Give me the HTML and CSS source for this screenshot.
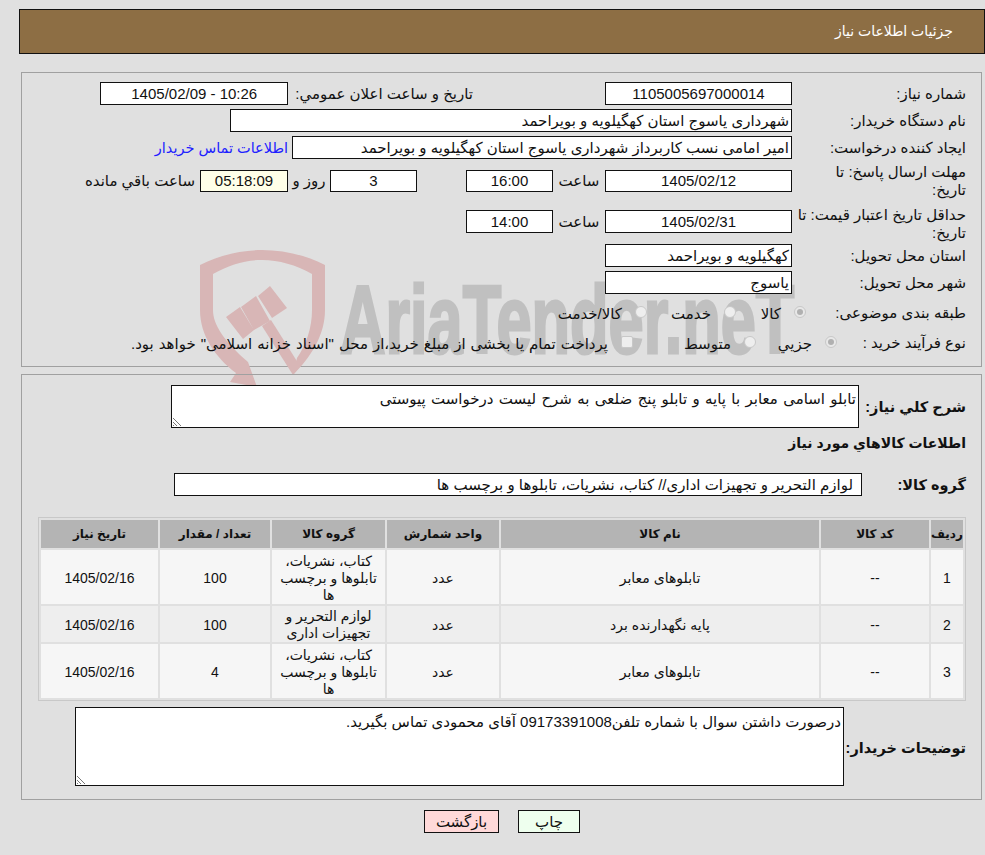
FILE: index.html
```html
<!DOCTYPE html>
<html lang="fa" dir="rtl">
<head>
<meta charset="utf-8">
<title>جزئیات اطلاعات نیاز</title>
<link rel="stylesheet" href="styles.css">
</head>
<body>
<header class="title-bar">جزئیات اطلاعات نیاز</header>

<section class="panel top-panel">
  <svg class="wm-shield" viewBox="195 245 140 145" width="140" height="145" aria-hidden="true">
    <path class="wm-red" d="M200 265 C221 255 241 250 262 250 C284 250 305 255 325 265 L325 310 C325 335 311 357 293 375 L297 358 C306 345 312 328 312 310 L312 274 C296 265 279 260 262 260 C245 260 229 265 213 274 L213 310 C213 325 225 342 248 362 L257 387 L230 382 L236 373 C215 357 200 335 200 310 Z"/>
    <path class="wm-red" d="M270 286 L287 308 L272 318 L258 296 Z M256 296 L270 321 L254 330 L241 307 Z M240 307 L254 330 L243 339 L226 317 Z"/>
    <path class="wm-red" d="M271 320 L262 326 L286 364 L293 375 L300 366 Z"/>
  </svg>
  <span class="wm-text" dir="ltr" aria-hidden="true">AriaTender.neT</span>

  <div class="row r-h">
    <span class="lbl">شماره نیاز:</span>
    <span class="box w-187 center">1105005697000014</span>
    <span class="lbl-pub">تاريخ و ساعت اعلان عمومي:</span>
    <span class="box w-188 center" dir="ltr">1405/02/09 - 10:26</span>
  </div>
  <div class="row r-h">
    <span class="lbl">نام دستگاه خریدار:</span>
    <span class="box w-562">شهرداری یاسوج استان کهگیلویه و بویراحمد</span>
  </div>
  <div class="row r-h r-gap">
    <span class="lbl">ایجاد کننده درخواست:</span>
    <span class="box w-500">امیر امامی نسب کاربرداز شهرداری یاسوج استان کهگیلویه و بویراحمد</span>
    <a class="contact" href="#">اطلاعات تماس خریدار</a>
  </div>
  <div class="row r-deadline">
    <span class="lbl">مهلت ارسال پاسخ: تا<br>تاریخ:</span>
    <span class="box w-187 short center">1405/02/12</span>
    <span class="lbl-time">ساعت</span>
    <span class="box w-87 short center">16:00</span>
    <span class="box w-87 short center days">3</span>
    <span class="lbl-day">روز و</span>
    <span class="box w-88 short center timer">05:18:09</span>
    <span class="lbl-left">ساعت باقي مانده</span>
  </div>
  <div class="row r-h r-gap">
    <span class="lbl lbl-low">حداقل تاریخ اعتبار قیمت: تا<br>تاریخ:</span>
    <span class="box w-187 center">1405/02/31</span>
    <span class="lbl-time">ساعت</span>
    <span class="box w-87 center">14:00</span>
  </div>
  <div class="row r-h">
    <span class="lbl">استان محل تحویل:</span>
    <span class="box w-187">کهگیلویه و بویراحمد</span>
  </div>
  <div class="row r-h">
    <span class="lbl">شهر محل تحویل:</span>
    <span class="box w-187">یاسوج</span>
  </div>
  <div class="row r-opt r-subject">
    <span class="lbl lbl-subject">طبقه بندی موضوعی:</span>
    <span class="radio sel"></span><span class="opt o-kala">کالا</span>
    <span class="radio"></span><span class="opt o-khed">خدمت</span>
    <span class="radio"></span><span class="opt o-both">کالا/خدمت</span>
  </div>
  <div class="row r-opt">
    <span class="lbl lbl-process">نوع فرآیند خرید :</span>
    <span class="radio sel"></span><span class="opt o-jozi">جزيي</span>
    <span class="radio"></span><span class="opt o-mot">متوسط</span>
    <span class="check"></span><span class="opt o-pay">پرداخت تمام یا بخشی از مبلغ خرید،از محل "اسناد خزانه اسلامی" خواهد بود.</span>
  </div>
</section>

<section class="panel main-panel">
  <div class="desc-row">
    <span class="lbl-b">شرح كلي نياز:</span>
    <div class="area area-desc">تابلو اسامی معابر با پایه و تابلو پنج ضلعی به شرح لیست درخواست پیوستی
      <svg class="grip" viewBox="0 0 10 10" width="10" height="10"><path d="M1 1 L9 9 M1 5 L5 9 M1 8 L2 9"/></svg>
    </div>
  </div>
  <h2 class="section-h">اطلاعات كالاهاي مورد نياز</h2>
  <div class="group-row">
    <span class="lbl-b">گروه کالا:</span>
    <span class="box group">لوازم التحریر و تجهیزات اداری// کتاب، نشریات، تابلوها و برچسب ها</span>
  </div>
  <div class="table-wrap">
    <table class="items">
      <colgroup>
        <col class="c1"><col class="c2"><col class="c3"><col class="c4"><col class="c5"><col class="c6"><col class="c7">
      </colgroup>
      <thead>
        <tr><th>رديف</th><th>کد کالا</th><th>نام کالا</th><th>واحد شمارش</th><th>گروه کالا</th><th>تعداد / مقدار</th><th>تاریخ نیاز</th></tr>
      </thead>
      <tbody>
        <tr class="odd"><td>1</td><td>--</td><td>تابلوهای معابر</td><td>عدد</td><td>کتاب، نشریات، تابلوها و برچسب ها</td><td>100</td><td>1405/02/16</td></tr>
        <tr class="even"><td>2</td><td>--</td><td>پایه نگهدارنده برد</td><td>عدد</td><td>لوازم التحریر و تجهیزات اداری</td><td>100</td><td>1405/02/16</td></tr>
        <tr class="odd"><td>3</td><td>--</td><td>تابلوهای معابر</td><td>عدد</td><td>کتاب، نشریات، تابلوها و برچسب ها</td><td>4</td><td>1405/02/16</td></tr>
      </tbody>
    </table>
  </div>
  <div class="note-row">
    <span class="lbl-b">توضیحات خریدار:</span>
    <div class="area area-note">درصورت داشتن سوال با شماره تلفن09173391008 آقای محمودی تماس بگیرید.
      <svg class="grip" viewBox="0 0 10 10" width="10" height="10"><path d="M1 1 L9 9 M1 5 L5 9 M1 8 L2 9"/></svg>
    </div>
  </div>
</section>

<div class="actions">
  <button class="btn print" type="button">چاپ</button>
  <button class="btn back" type="button">بازگشت</button>
</div>
</body>
</html>
```

FILE: styles.css
```css
* { box-sizing: border-box; }
html, body { margin: 0; padding: 0; }
body {
  width: 985px;
  height: 855px;
  overflow: hidden;
  background: #e0e0e0;
  color: #111;
  font-family: "Liberation Sans", "DejaVu Sans", sans-serif;
  font-size: 15px;
  line-height: 18px;
  padding: 9px 0 0 19px;
}
.title-bar {
  height: 45px;
  border: 1px solid #111;
  background: #8d6e44;
  color: #fff;
  padding: 13px 31px 0 0;
  font-size: 14px;
  line-height: 17px;
}
.panel {
  position: relative;
  border: 1px solid #a0a0a0;
  margin-left: 2px;
  margin-right: 3px;
}
.top-panel { margin-top: 18px; height: 295px; padding-top: 9px; }
.main-panel { margin-top: 7px; height: 426px; padding-top: 10px; }

.wm-shield { position: absolute; left: 173px; top: 172px; overflow: visible; }
.wm-red { fill: #d8b6b6; }
.wm-text {
  position: absolute;
  left: 318px;
  top: 198px;
  font-family: "Liberation Sans", sans-serif;
  font-weight: 700;
  font-size: 97px;
  line-height: 97px;
  color: #c0c0c0;
  -webkit-text-stroke: 3px #c0c0c0;
  white-space: nowrap;
  transform-origin: left top;
  transform: scaleX(0.65);
}

.row { position: relative; display: flex; align-items: center; }
.r-h { height: 23px; margin-bottom: 4px; }
.r-gap { margin-bottom: 11px; }
.r-deadline { height: 22px; margin-bottom: 18px; }
.r-opt { height: 20px; }
.r-subject { margin-top: 8px; margin-bottom: 10px; }

.lbl { flex: none; width: 189px; padding-right: 15px; white-space: nowrap; }
.lbl-low { padding-top: 4px; }
.lbl-subject { width: 175px; }
.lbl-process { width: 144px; }
.lbl-subject, .lbl-process { padding-top: 2px; }
.box {
  display: block;
  flex: none;
  height: 23px;
  line-height: 21px;
  background: #fff;
  border: 1px solid #111;
  padding: 0 2px;
  white-space: nowrap;
  overflow: hidden;
}
.short { height: 22px; line-height: 20px; }
.center { text-align: center; }
.w-187 { width: 187px; }
.w-188 { width: 188px; }
.w-562 { width: 562px; }
.w-500 { width: 500px; }
.w-88 { width: 88px; }
.w-87 { width: 87px; }
.lbl-pub { flex: none; margin-right: 132px; margin-left: 7px; white-space: nowrap; }
.contact { color: #2020ff; text-decoration: none; margin-right: 4px; white-space: nowrap; font-size: 14.5px; }
.lbl-time { flex: none; width: 52px; text-align: center; }
.days { margin-right: 49px; }
.lbl-day { flex: none; width: 42px; text-align: center; }
.timer { background: #ffffe8; }
.lbl-left { margin-right: 5px; white-space: nowrap; }

.radio, .check {
  flex: none;
  display: block;
  width: 12px;
  height: 12px;
  background: #eeeeee;
  border: 1px solid #c8c8c8;
}
.radio { border-radius: 50%; position: relative; }
.radio.sel { background: #e8e8e8; }
.radio.sel::after {
  content: "";
  position: absolute;
  inset: 2px;
  border-radius: 50%;
  background: #b0b0b0;
}
.check { border-radius: 2px; }
.opt { flex: none; white-space: nowrap; padding-top: 4px; margin-right: 13px; }
.o-kala { width: 45px; }
.o-khed { width: 64px; }
.o-jozi { width: 56px; }
.o-mot { width: 98px; }
.o-pay { word-spacing: 0.8px; }

.lbl-b {
  flex: none;
  font-weight: 700;
  font-size: 14.5px;
  white-space: nowrap;
  padding-right: 15px;
}
.desc-row, .group-row, .note-row { display: flex; align-items: center; }
.desc-row .lbl-b { width: 122px; }
.group-row .lbl-b { width: 119px; }
.note-row .lbl-b { width: 137px; padding-top: 3px; }
.area {
  position: relative;
  flex: none;
  background: #fff;
  border: 1px solid #111;
  padding: 4px 2px;
}
.area-desc { width: 688px; height: 43px; word-spacing: 1.2px; }
.area-note { width: 769px; height: 79px; padding-top: 5px; }
.grip { position: absolute; left: 0; bottom: 0; stroke: #777; stroke-width: 1; fill: none; }
.section-h {
  margin: 5px 15px 0 0;
  font-size: 14px;
  font-weight: 700;
  line-height: 20px;
}
.group-row { margin-top: 20px; }
.group { width: 688px; padding-right: 8px; }
.table-wrap {
  margin: 21px 15px 0 16px;
  border: 1px solid #c8c8c8;
}
.items {
  width: 100%;
  border-collapse: separate;
  border-spacing: 2px;
  table-layout: fixed;
  margin: 0;
  text-align: center;
  font-size: 14px;
  line-height: 17px;
}
.c1 { width: 32px; }
.c2 { width: 108px; }
.c3 { width: 318px; }
.c4 { width: 112px; }
.c5 { width: 113px; }
.c6 { width: 110px; }
.c7 { width: 117px; }
.items th {
  background: #b4b4b4;
  height: 28px;
  padding: 0;
  font-size: 12px;
  font-weight: 700;
}
.items td { padding: 2px 6px 0; height: 54px; }
.items .even td { height: 36px; }
.odd td { background: #f6f6f6; }
.even td { background: #eeeeee; }
.note-row { margin-top: 6px; }
.actions { display: flex; justify-content: center; gap: 19px; margin-top: 10px; }
.btn {
  font-family: inherit;
  font-size: 15px;
  height: 23px;
  border: 1px solid #111;
  color: #111;
  padding: 0;
  line-height: 19px;
}
.print { width: 62px; background: #eeffee; }
.back { width: 75px; background: #ffd9d9; }
```
